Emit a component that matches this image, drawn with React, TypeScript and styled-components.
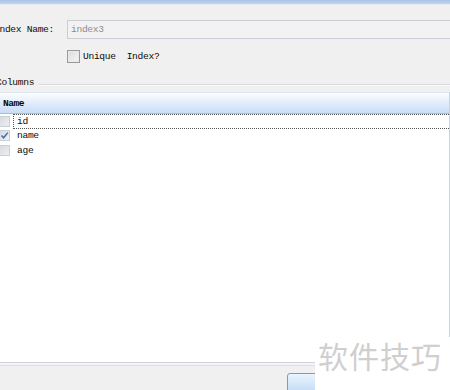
import styled, { createGlobalStyle } from 'styled-components';

const GlobalStyle = createGlobalStyle`
  html, body {
    margin: 0;
    padding: 0;
    background: #f0f0f0;
  }
  body {
    font-family: 'Liberation Mono', 'DejaVu Sans Mono', monospace;
    font-size: 9.6px;
    color: #0a0a0a;
  }
`;

const Window = styled.div`
  position: relative;
  width: 450px;
  height: 390px;
  overflow: hidden;
  display: flex;
  flex-direction: column;
  background: #f0f0f0;
`;

const TitleEdge = styled.div`
  height: 4px;
  background: linear-gradient(#a9c3e4, #c2d5ee);
  border-bottom: 1px solid #e6ebf2;
  flex-shrink: 0;
`;

const Form = styled.div`
  display: flex;
  flex-direction: column;
  padding: 15px 0 0 0;
  margin-left: -6px;
  flex-shrink: 0;
`;

const FieldRow = styled.div`
  display: flex;
  align-items: center;
  height: 19px;
`;

const Label = styled.span`
  width: 73px;
  letter-spacing: -0.3px;
`;

const TextBox = styled.div`
  flex: 1;
  height: 17px;
  border: 1px solid #c9cdd4;
  border-right: none;
  background: #f2f2f2;
  color: #8c8c8c;
  padding-left: 3px;
  display: flex;
  align-items: center;
  letter-spacing: -0.3px;
`;

const CheckRow = styled.label`
  display: flex;
  align-items: center;
  gap: 3px;
  margin: 11px 0 0 73px;
  letter-spacing: -0.3px;
  white-space: pre;
`;

const Box = styled.span<{ $size: number }>`
  width: ${(p) => p.$size}px;
  height: ${(p) => p.$size}px;
  box-sizing: border-box;
  border: 1px solid #9a9a9a;
  background: linear-gradient(135deg, #dcdcdc, #f6f6f6);
  box-shadow: inset 0 0 0 1px #e9e9e9;
  display: flex;
  align-items: center;
  justify-content: center;
  flex-shrink: 0;
`;

const GroupTitle = styled.div`
  display: flex;
  align-items: center;
  gap: 4px;
  margin: 14px 0 0 2px;
  height: 10px;
  letter-spacing: -0.3px;

  &::after {
    content: '';
    flex: 1;
    height: 1px;
    margin-top: 5px;
    background: #d5d9e0;
    box-shadow: 0 1px 0 #fbfbfb;
  }
`;

const Table = styled.div`
  margin-top: 5px;
  height: 270px;
  flex-shrink: 0;
  background: #ffffff;
  border-right: 1px solid #c8d3e2;
  display: flex;
  flex-direction: column;
`;

const HeaderCell = styled.div`
  height: 20px;
  background: linear-gradient(#fbfdff, #c8ddf7);
  border-bottom: 1px solid #a8c0de;
  border-top: 1px solid #dfe7f1;
  display: flex;
  align-items: center;
  padding-left: 3px;
  font-weight: bold;
  letter-spacing: -0.5px;
`;

const Row = styled.div<{ $focused?: boolean }>`
  height: 14.5px;
  display: flex;
  align-items: center;
  margin-left: -1px;

  & > span:last-child {
    flex: 1;
    height: 13px;
    display: flex;
    align-items: center;
    margin-left: 3px;
    padding-left: 3px;
    letter-spacing: -0.3px;
    border: 1px dotted ${(p) => (p.$focused ? '#555' : 'transparent')};
    border-right: none;
  }
`;

const RowBox = styled(Box)`
  border-color: #c9cfd7;
  background: linear-gradient(135deg, #d6d9de, #eef0f3);
  box-shadow: none;
`;

const Footer = styled.div`
  flex: 1;
  min-height: 0;
  overflow: hidden;
  border-top: 1px solid #cfd3de;
  display: flex;
  flex-direction: column;

  &::before {
    content: '';
    height: 2px;
    background: #f5f5f7;
    border-bottom: 1px solid #dcdfe6;
    flex-shrink: 0;
  }
`;

const ButtonBar = styled.div`
  display: flex;
  padding: 7px 0 0 287px;
`;

const Button = styled.div`
  width: 70px;
  height: 24px;
  flex-shrink: 0;
  border: 1px solid #7a9cc6;
  border-radius: 3px;
  background: linear-gradient(#eaf4fd, #b5d4f3);
`;

const Watermark = styled.div`
  position: absolute;
  right: 0;
  bottom: 0;
  width: 135px;
  height: 53px;
  background: #ffffff;
  color: #cfcfcf;
  font-family: 'Noto Sans CJK SC', 'Noto Sans', sans-serif;
  font-size: 30px;
  letter-spacing: 1px;
  display: flex;
  align-items: flex-start;
  padding-left: 3px;
  box-sizing: border-box;
  line-height: 36px;
`;

const Check = () => (
  <svg width="9" height="9" viewBox="0 0 9 9">
    <path d="M1.5 4.5 L3.6 6.8 L7.8 1.6" fill="none" stroke="#3f6fb4" strokeWidth="1.5" />
  </svg>
);

const columns = [
  { name: 'id', checked: false, focused: true },
  { name: 'name', checked: true, focused: false },
  { name: 'age', checked: false, focused: false },
];

export default function App() {
  return (
    <Window>
      <GlobalStyle />
      <TitleEdge />
      <Form>
        <FieldRow>
          <Label>Index Name:</Label>
          <TextBox>index3</TextBox>
        </FieldRow>
        <CheckRow>
          <Box $size={13} />
          <span>Unique  Index?</span>
        </CheckRow>
        <GroupTitle>Columns</GroupTitle>
      </Form>
      <Table>
        <HeaderCell>Name</HeaderCell>
        {columns.map((c) => (
          <Row key={c.name} $focused={c.focused}>
            <RowBox $size={11}>{c.checked && <Check />}</RowBox>
            <span>{c.name}</span>
          </Row>
        ))}
      </Table>
      <Footer>
        <ButtonBar>
          <Button />
        </ButtonBar>
      </Footer>
      <Watermark>软件技巧</Watermark>
    </Window>
  );
}
